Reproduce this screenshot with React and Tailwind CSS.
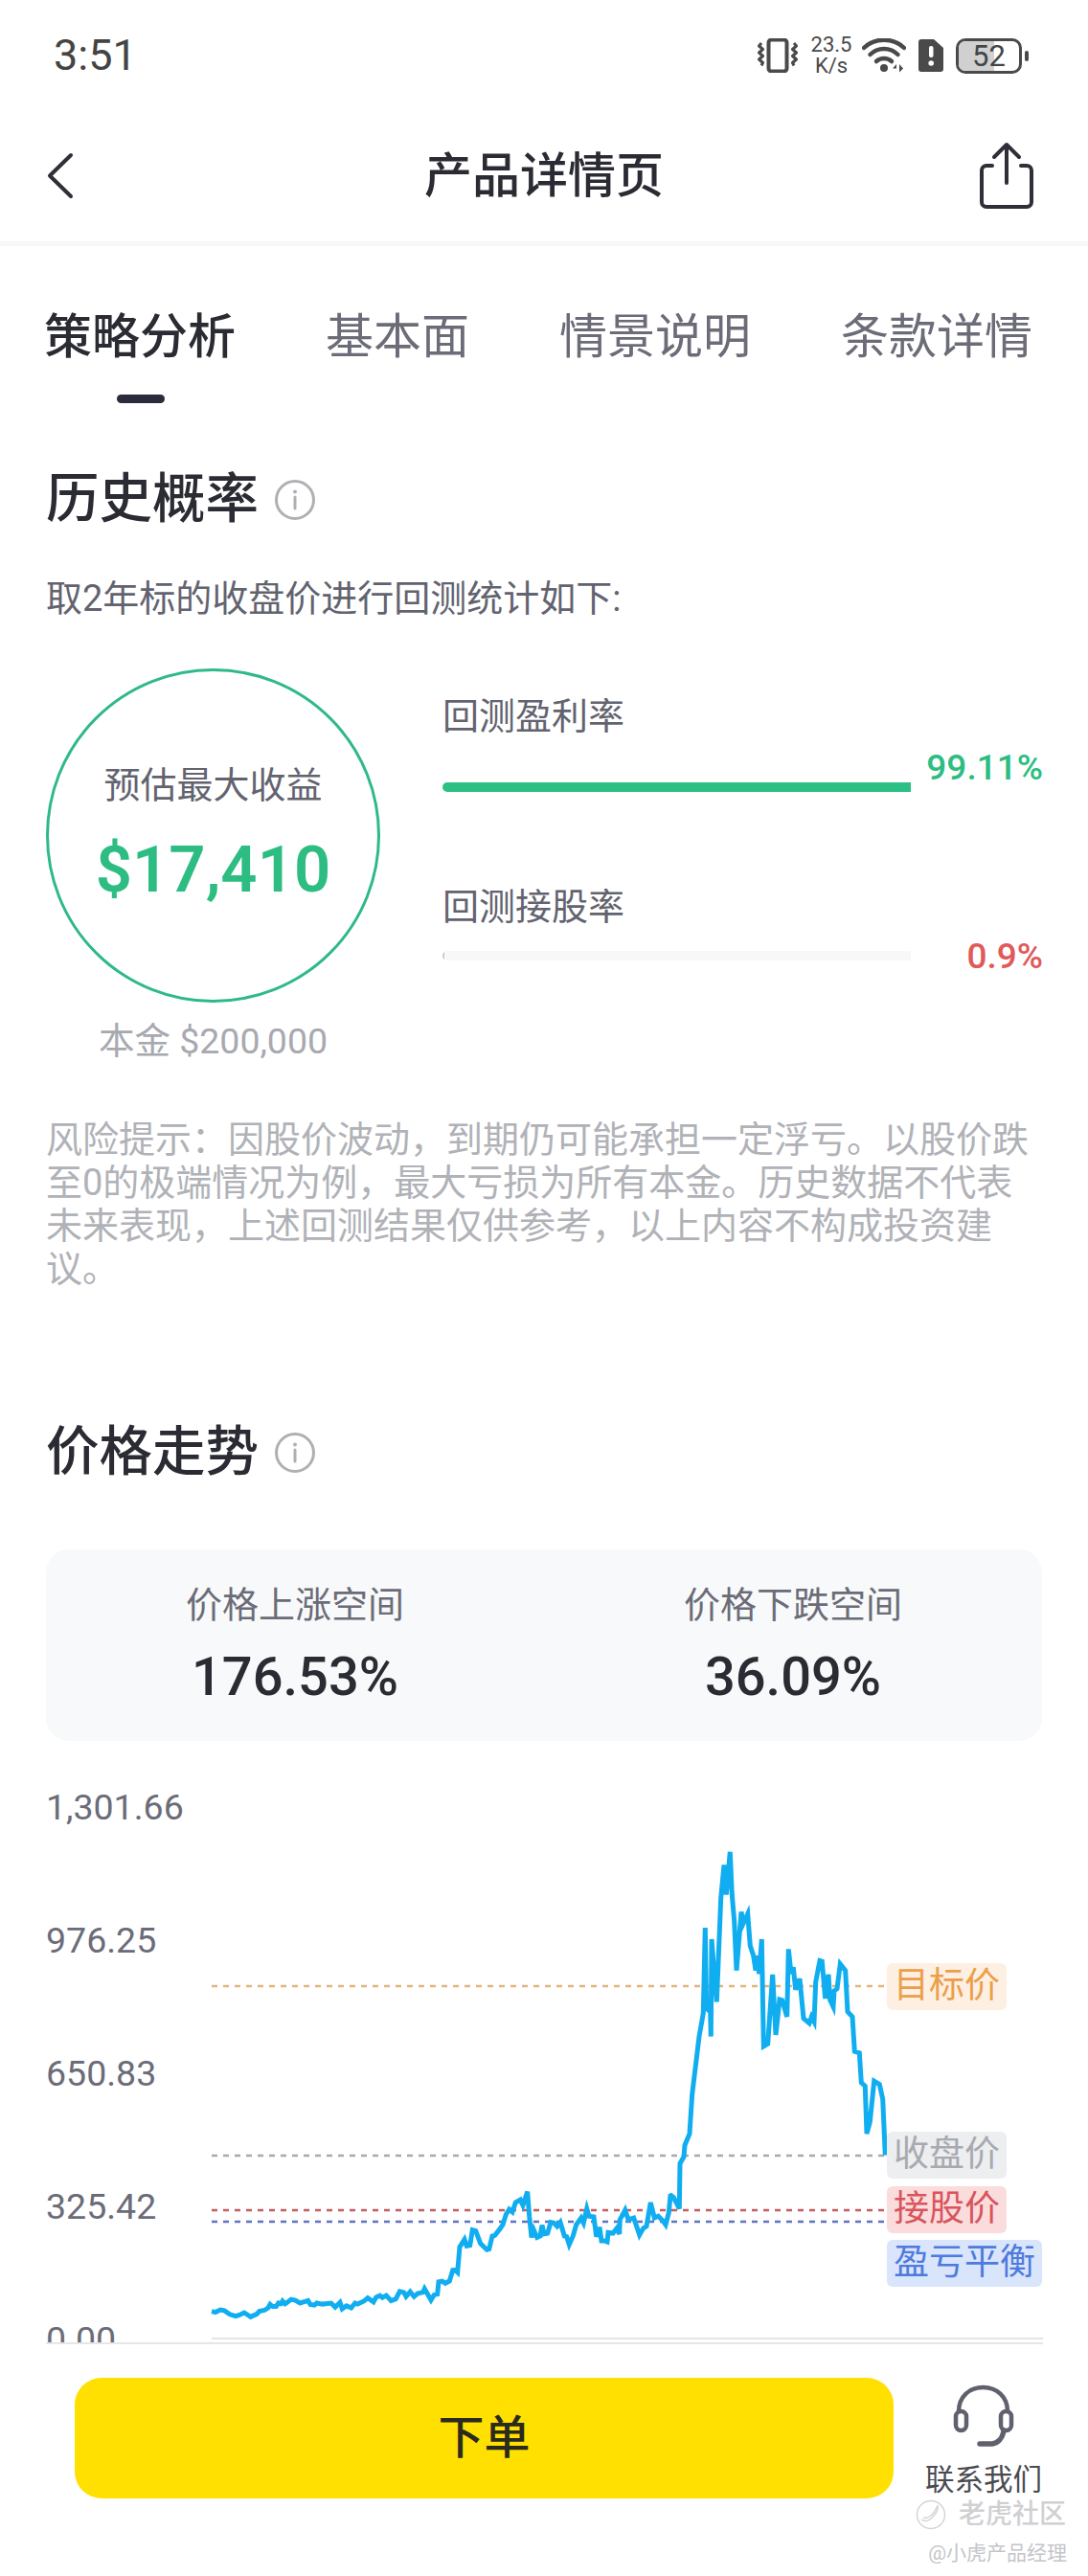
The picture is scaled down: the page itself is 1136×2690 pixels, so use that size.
import React from 'react';

// chart traced from the reference; left part and right part use different crop scales
const LEFT_TRACE = [
  [63,1438],[75,1441],[90,1434],[103,1436],[120,1447],[138,1452],[150,1449],[165,1442],[185,1454],[205,1446],[212,1438],[228,1435],[240,1428],[246,1418],[254,1424],[265,1424],[272,1414],[280,1416],[285,1408],[293,1416],[300,1412],[312,1403],[325,1406],[340,1414],[350,1411],[365,1407],[372,1418],[385,1420],[392,1414],[410,1417],[425,1415],[437,1414],[450,1426],[465,1412],[472,1431],[485,1422],[500,1428],[512,1414],[520,1417],[540,1408],[552,1399],[570,1411],[578,1397],[590,1392],[598,1398],[610,1392],[625,1407],[640,1402],[652,1380],[665,1383],[672,1395],[685,1381],[697,1395],[708,1386],[725,1382],[730,1372],[750,1405],[760,1390],[770,1388],[774,1352],[785,1350],[795,1356],[808,1350],[818,1318],[825,1317],[833,1324],[840,1250],[855,1228],[862,1247],[872,1245],[880,1200],[890,1203],[905,1240],[925,1258],[932,1256],[942,1218],[950,1216],[965,1198],[975,1185],[985,1155],[995,1140],[1005,1148],[1015,1120],[1030,1112],[1038,1128],[1052,1088],[1058,1160],[1065,1222],[1072,1200],[1082,1222],[1092,1218],[1098,1186],[1104,1212],[1115,1210],[1125,1178],[1135,1180],[1145,1190],[1155,1178],[1168,1218],[1175,1220],[1183,1243],[1195,1218],[1205,1185],[1220,1165],[1228,1180],[1238,1138],[1245,1160],[1260,1162],[1268,1220],[1278,1192],[1284,1232],[1292,1232],[1302,1235],[1305,1208],[1320,1210],[1332,1195],[1340,1212],[1342,1170],[1358,1142],[1368,1170],[1385,1165],[1395,1192],[1403,1215],[1415,1195],[1425,1190],[1438,1120],[1450,1165],[1462,1160],[1475,1172],[1485,1185],[1495,1150],[1500,1100],
];
const RIGHT_TRACE = [
  [182,1082],[190,1088],[208,1122],[210,985],[222,965],[225,930],[240,895],[248,775],[262,665],[270,600],[283,530],[289,270],[293,515],[305,525],[307,600],[309,305],[325,495],[338,180],[348,80],[355,170],[367,40],[373,170],[380,250],[387,400],[402,222],[408,258],[422,228],[430,325],[440,355],[447,400],[450,355],[458,410],[466,305],[472,630],[485,622],[500,412],[510,595],[522,488],[530,490],[545,540],[550,335],[558,410],[565,390],[572,458],[585,425],[597,545],[615,560],[622,540],[630,555],[635,435],[648,370],[655,372],[665,485],[675,412],[680,490],[690,510],[693,462],[702,455],[712,380],[728,400],[735,525],[750,540],[757,645],[772,650],[778,740],[790,750],[795,895],[805,860],[818,735],[835,745],[845,790],[853,960],
];

// page coords -> chart-local coords (chart box starts at 48,1865)
const linePoints = [
  ...LEFT_TRACE.map(([x, y]) => [200 + x / 3 - 48, 1900 + y / 2.8 - 1865]),
  ...RIGHT_TRACE.map(([x, y]) => [640 + x / 3 - 48, 1920 + y / 2.904 - 1865]),
]
  .map(([x, y]) => `${x.toFixed(1)},${y.toFixed(1)}`)
  .join(' ');

const DASHES = [
  { y: 209, color: '#e3b57c' },
  { y: 386, color: '#a9a9ac' },
  { y: 443, color: '#c75a62' },
  { y: 455, color: '#5f72c4' },
];

const Y_LABELS = ['1,301.66', '976.25', '650.83', '325.42', '0.00'];

const TABS = ['策略分析', '基本面', '情景说明', '条款详情'];

// full-width colon and comma, as in the reference
const RISK_TEXT = '风险提示\uFF1A因股价波动\uFF0C到期仍可能承担一定浮亏。以股价跌至0的极端情况为例\uFF0C最大亏损为所有本金。历史数据不代表未来表现\uFF0C上述回测结果仅供参考\uFF0C以上内容不构成投资建议。';

const InfoIcon = () => (
  <svg width="44" height="44" viewBox="0 0 44 44" fill="none">
    <circle cx="22" cy="22" r="19.5" stroke="#aeb0b4" strokeWidth="3" />
    <circle cx="22" cy="13.5" r="2" fill="#aeb0b4" />
    <path d="M22 19v12" stroke="#aeb0b4" strokeWidth="3" strokeLinecap="round" />
  </svg>
);

const SectionTitle = ({ children, className }) => (
  <div className={`flex items-center gap-[16px] px-[48px] ${className}`}>
    <h2 className="text-[55.500px] leading-[64px] font-medium text-[#2a2b33]">{children}</h2>
    <InfoIcon />
  </div>
);

const StatusBar = () => (
  <div className="h-[116px] flex items-center justify-between pl-[56px] pr-[62px] text-[#444444]">
    <span className="text-[45px] leading-[50px]">3:51</span>
    <div className="flex items-center">
      {/* vibrate */}
      <svg width="42" height="36" viewBox="0 0 42 36" fill="none" stroke="#4a4a4a" strokeWidth="3">
        <rect x="11.5" y="1.5" width="19" height="33" rx="3" strokeWidth="4" />
        <path d="M4 5l-2.500 3 4 3.500-4 3.500 4 3.500-4 3.500 4 3.500-1.500 3" strokeLinejoin="round" />
        <path d="M38 5l2.500 3-4 3.500 4 3.500-4 3.500 4 3.500-4 3.500 1.500 3" strokeLinejoin="round" />
      </svg>
      <div className="ml-[13px] w-[44px] flex flex-col items-center text-[22px] leading-[22px] text-[#4a4a4a]">
        <span>23.5</span>
        <span>K/s</span>
      </div>
      {/* wifi */}
      <svg className="ml-[10px]" width="46" height="36" viewBox="0 0 46 36" fill="none" stroke="#4a4a4a" strokeWidth="4.500" strokeLinecap="round">
        <path d="M2 10C13 -1 33 -1 44 10" />
        <path d="M8.500 17C16.500 9 29.500 9 37.500 17" />
        <path d="M15 24C19.500 20 26.500 20 31 24" />
        <circle cx="23" cy="31" r="4" fill="#4a4a4a" stroke="none" />
        <path d="M36 27l-4 4.500h4zM39 27l4 4.500-4 4z" fill="#4a4a4a" stroke="none" />
      </svg>
      {/* sim alert */}
      <svg className="ml-[13px]" width="26" height="34" viewBox="0 0 26 34">
        <path d="M3 0h13l10 9v22a3 3 0 0 1-3 3H3a3 3 0 0 1-3-3V3a3 3 0 0 1 3-3z" fill="#4a4a4a" />
        <rect x="11" y="7" width="4.500" height="12" rx="2" fill="#ffffff" />
        <circle cx="13.200" cy="25" r="2.800" fill="#ffffff" />
      </svg>
      {/* battery */}
      <div className="ml-[13px] relative w-[69px] h-[37px] rounded-[10px] border-[3px] border-[#4a4a4a] overflow-hidden flex items-center justify-center">
        <div className="absolute left-0 top-0 bottom-0 w-[37px] bg-[#d0d0d0]" />
        <span className="relative text-[31px] leading-none text-[#444444]">52</span>
      </div>
      <div className="ml-[3px] w-[4px] h-[11px] rounded-[2px] bg-[#4a4a4a]" />
    </div>
  </div>
);

const NavBar = () => (
  <div className="relative h-[136px] flex items-center justify-center border-b-[5px] border-[#f7f7f8] box-content">
    <svg className="absolute left-[46px] top-[42px]" width="32" height="50" viewBox="0 0 32 50" fill="none">
      <path d="M28 4L6 25.500 28 47" stroke="#2e2f38" strokeWidth="4" strokeLinecap="round" strokeLinejoin="round" />
    </svg>
    <h1 className="text-[50px] leading-[60px] font-medium text-[#2a2b33]">产品详情页</h1>
    <svg className="absolute left-[1020px] top-[32px]" width="64" height="72" viewBox="0 0 64 72" fill="none" stroke="#2e2f38" strokeWidth="4" strokeLinecap="round" strokeLinejoin="round">
      <path d="M31 4v39" />
      <path d="M18 16L31 3 44 16" />
      <path d="M16 25h-6a5 5 0 0 0-5 5v33a5 5 0 0 0 5 5h42a5 5 0 0 0 5-5V30a5 5 0 0 0-5-5h-6" />
    </svg>
  </div>
);

const Tabs = () => (
  <div className="pt-[65px] pl-[46px]">
    <div className="flex gap-[94px]">
      {TABS.map((tab, i) => (
        <span key={tab} className={`text-[50px] leading-[60px] ${i === 0 ? 'font-medium text-[#2a2b33]' : 'text-[#6b6c78]'}`}>
          {tab}
        </span>
      ))}
    </div>
    <div className="mt-[30px] ml-[76px] w-[50px] h-[9px] rounded-full bg-[#2a2b3c]" />
  </div>
);

const RateRow = ({ label, value, valueColor, fill, fillWidth, className, barOffset, valueOffset }) => (
  <div className={className}>
    <div className="text-[38px] leading-[50px] text-[#62636f]">{label}</div>
    <div className={`flex items-start ${valueOffset}`}>
      <div className={`w-[489px] h-[10px] rounded-l-full bg-[#f8f8f9] overflow-hidden ${barOffset}`}>
        <div className={`h-full ${fill} ${fillWidth}`} />
      </div>
      <div className={`flex-1 text-right text-[37px] leading-[44px] font-medium ${valueColor}`}>{value}</div>
    </div>
  </div>
);

const HistorySection = () => (
  <section>
    <SectionTitle className="mt-[69px]">历史概率</SectionTitle>
    <p className="mt-[46px] px-[48px] text-[38px] leading-[50px] text-[#62636f]">取2年标的收盘价进行回测统计如下:</p>

    <div className="mt-[48px] pl-[48px] pr-[47px] flex">
      <div className="w-[349px]">
        <div className="w-[349px] h-[349px] rounded-full border-[3px] border-[#2fb98a] flex flex-col items-center">
          <div className="mt-[94px] text-[38px] leading-[50px] text-[#62636f]">预估最大收益</div>
          <div className="mt-[23px] text-[67px] leading-[80px] font-semibold text-[#2dbd82]">$17,410</div>
        </div>
        <div className="mt-[18px] text-center text-[37.500px] leading-[44px] text-[#a8a9b0]">本金 $200,000</div>
      </div>
      <div className="ml-[65px] flex-1 pt-[25px]">
        <RateRow
          label="回测盈利率"
          value="99.11%"
          valueColor="text-[#2dbd82]"
          fill="bg-[#2dc084]"
          fillWidth="w-full"
          valueOffset="mt-[7px]"
          barOffset="mt-[37px]"
        />
        <RateRow
          className="mt-[95px]"
          label="回测接股率"
          value="0.9%"
          valueColor="text-[#e05a5a]"
          fill="bg-[#c8c8cc]"
          fillWidth="w-[2px]"
          valueOffset="mt-[5px]"
          barOffset="mt-[16px]"
        />
      </div>
    </div>

    <p className="mt-[59px] px-[48px] text-[38px] leading-[45px] text-[#b0b2b7]">{RISK_TEXT}</p>
  </section>
);

const Tag = ({ className, children }) => (
  <div className={`absolute left-[878px] h-[49px] px-[7px] rounded-[6px] text-[37px] leading-[47px] ${className}`}>{children}</div>
);

const PriceChart = () => (
  <div className="relative mt-[47px] mx-[48px] h-[600px]">
    <div className="flex flex-col gap-[95px]">
      {Y_LABELS.map((v) => (
        <span key={v} className="text-[37.500px] leading-[44px] text-[#6b6c78]">{v}</span>
      ))}
    </div>
    <svg className="absolute left-0 top-0" width="1041" height="600" viewBox="0 0 1041 600" fill="none">
      {DASHES.map((d) => (
        <line key={d.y} x1="173" x2="876" y1={d.y} y2={d.y} stroke={d.color} strokeWidth="2.500" strokeDasharray="6 6" />
      ))}
      <line x1="173" x2="1041" y1="577" y2="577" stroke="#e6e6e9" strokeWidth="2" />
      <polyline points={linePoints} stroke="#10aef0" strokeWidth="5" />
    </svg>
    <Tag className="top-[185px] bg-[#fdf0e3] text-[#ec9f4a]">目标价</Tag>
    <Tag className="top-[361px] bg-[#eceef0] text-[#a8aab0]">收盘价</Tag>
    <Tag className="top-[418px] bg-[#fbdcdc] text-[#d9545c]">接股价</Tag>
    <Tag className="top-[474px] bg-[#d9e5fb] text-[#4f7ade]">盈亏平衡</Tag>
  </div>
);

const PriceSection = () => (
  <section>
    <SectionTitle className="mt-[137px]">价格走势</SectionTitle>
    <div className="mt-[69px] mx-[48px] h-[200px] rounded-[24px] bg-[#f8f9fa] grid grid-cols-2 items-center text-center">
      <div>
        <div className="text-[38px] leading-[50px] text-[#6b6c78]">价格上涨空间</div>
        <div className="mt-[15px] text-[56px] leading-[70px] font-medium text-[#2a2b33]">176.53%</div>
      </div>
      <div>
        <div className="text-[38px] leading-[50px] text-[#6b6c78]">价格下跌空间</div>
        <div className="mt-[15px] text-[56px] leading-[70px] font-medium text-[#2a2b33]">36.09%</div>
      </div>
    </div>
    <PriceChart />
  </section>
);

const Footer = () => (
  <div className="absolute left-0 top-[2446px] w-full h-[244px] bg-white">
    <div className="mx-[48px] w-[1041px] h-[2px] bg-[#e6e6e9]" />
    <div className="mt-[35px] pl-[78px] flex">
      <button className="w-[855px] h-[126px] rounded-[28px] bg-[#ffe000] text-[48px] font-medium text-[#2a2a1e]">下单</button>
      <div className="ml-[33px] w-[122px] flex flex-col items-center">
        <svg className="mt-[5px]" width="70" height="70" viewBox="0 0 70 70" fill="none" stroke="#60616e" strokeWidth="4.500" strokeLinecap="round">
          <path d="M9 30C9 15 20 5 34.500 5S60 15 60 30" />
          <rect x="6" y="30" width="11" height="20" rx="5.500" />
          <rect x="53" y="30" width="11" height="20" rx="5.500" />
          <path d="M56 50C55 58 50 63 44 64L31 64" strokeWidth="5.500" />
        </svg>
        <span className="mt-[14px] text-[30.500px] leading-[36px] whitespace-nowrap text-[#4a4a50]">联系我们</span>
      </div>
    </div>
    {/* watermark */}
    <div className="absolute left-[956px] top-[164px] flex items-center">
      <svg width="32" height="32" viewBox="0 0 32 32" fill="none" stroke="#d4d5d8" strokeWidth="1.500">
        <circle cx="16" cy="16" r="14.500" />
        <path d="M6 21c4 3 9 1 13-4s5-8 4-10c-2 3-3 6-6 9s-6 4-9 3" />
      </svg>
      <span className="ml-[13px] text-[28px] leading-[32px] text-[#cfd0d3] font-medium">老虎社区</span>
    </div>
    <div className="absolute right-[22px] top-[207px] text-[21px] leading-[26px] text-[#c4c5c9]">@小虎产品经理</div>
  </div>
);

const App = () => (
  <div className="relative w-[1136px] h-[2690px] overflow-hidden bg-white font-['Roboto','Noto_Sans_CJK_SC',sans-serif]">
    <StatusBar />
    <NavBar />
    <Tabs />
    <HistorySection />
    <PriceSection />
    <Footer />
  </div>
);

export default App;
